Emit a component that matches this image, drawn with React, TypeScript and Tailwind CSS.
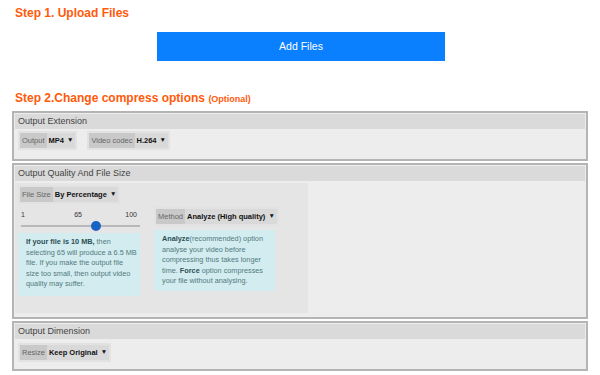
import React from 'react';

const font = { fontFamily: '"Liberation Sans", Arial, sans-serif' };

interface SelectProps {
  label: string;
  value: string;
}

// Label + value dropdown, as on the converter page
const Select: React.FC<SelectProps> = ({ label, value }) => (
  <div className="flex w-fit bg-[#e2e2e2] p-[2px]">
    <div className="flex h-[15px] items-center whitespace-nowrap text-[7.5px] leading-none">
      <span className="flex h-full items-center bg-[#c9c9c9] px-[2px] text-[#666]">{label}</span>
      <span className="flex h-full items-center gap-[3px] bg-[#d9d9d9] px-[2px] font-bold text-[#111]">
        {value} <span className="text-[6.5px]">▼</span>
      </span>
    </div>
  </div>
);

const Box: React.FC<{ title: string; className?: string; children: React.ReactNode }> = ({ title, className, children }) => (
  <div className={`mx-[12px] border-2 border-[#b4b4b4] bg-[#ededed] p-[1px] ${className ?? ''}`}>
    <div className="flex h-[15px] items-center bg-[#dadada] px-[3px] text-[9px] text-[#444]">{title}</div>
    {children}
  </div>
);

const infoCls = 'bg-[#d2ecef] pl-[8px] pt-[4px] text-[7.3px] leading-[10.5px] text-[#537a7f]';

export default function App() {
  return (
    <div className="h-[375px] w-[600px] overflow-hidden bg-white" style={font}>
      <h1 className="px-[15px] pt-[5px] text-[12px] font-bold leading-[16px] text-[#ff5a0a]">Step 1. Upload Files</h1>
      <div className="mt-[11px] flex justify-center pl-[2px]">
        <button className="h-[29px] w-[288px] bg-[#0a80ff] text-[10.5px] text-white">Add Files</button>
      </div>
      <h2 className="mt-[29px] px-[15px] text-[12px] font-bold leading-[16px] text-[#ff5a0a]">
        Step 2.Change compress options <span className="text-[9px]">(Optional)</span>
      </h2>

      <Box title="Output Extension" className="mt-[4px] h-[50px]">
        <div className="flex gap-[10px] px-[3px] pt-[2px]">
          <Select label="Output" value="MP4" />
          <Select label="Video codec" value="H.264" />
        </div>
      </Box>

      <Box title="Output Quality And File Size" className="mt-[2px] h-[156px]">
        <div className="mt-[2px] flex h-[130px] w-[293px] gap-[14px] bg-[#e5e5e5] px-[3px] pt-[2px]">
          <div className="w-[122px]">
            <Select label="File Size" value="By Percentage" />
            <div className="mt-[7px] flex justify-between px-[3px] text-[7px] leading-[8px] text-[#333]">
              <span>1</span>
              <span className="pl-[6px]">65</span>
              <span>100</span>
            </div>
            <div className="relative mt-[2px] h-[10px]">
              <div className="absolute left-[3px] right-0 top-[4px] h-[2px] bg-[#b8b8b8]" />
              <div className="absolute left-[73px] top-0 h-[10px] w-[10px] rounded-full bg-[#1a63c4]" />
            </div>
            <div className={`mt-[2px] h-[63px] pr-[2.5px] ${infoCls}`}>
              <b className="text-[#2c5056]">If your file is 10 MB,</b> then selecting 65 will produce a 6.5 MB file. If you make the output file size too small, then output video quality may suffer.
            </div>
          </div>
          <div className="w-[121px] pt-[22px]">
            <Select label="Method" value="Analyze (High quality)" />
            <div className={`mt-[4px] h-[61px] pr-[1px] ${infoCls}`}>
              <b className="text-[#2c5056]">Analyze</b>(recommended) option analyse your video before compressing thus takes longer time. <b className="text-[#2c5056]">Force</b> option compresses your file without analysing.
            </div>
          </div>
        </div>
      </Box>

      <Box title="Output Dimension" className="mt-[2px] h-[50px]">
        <div className="px-[3px] pt-[4px]">
          <Select label="Resize" value="Keep Original" />
        </div>
      </Box>
    </div>
  );
}
